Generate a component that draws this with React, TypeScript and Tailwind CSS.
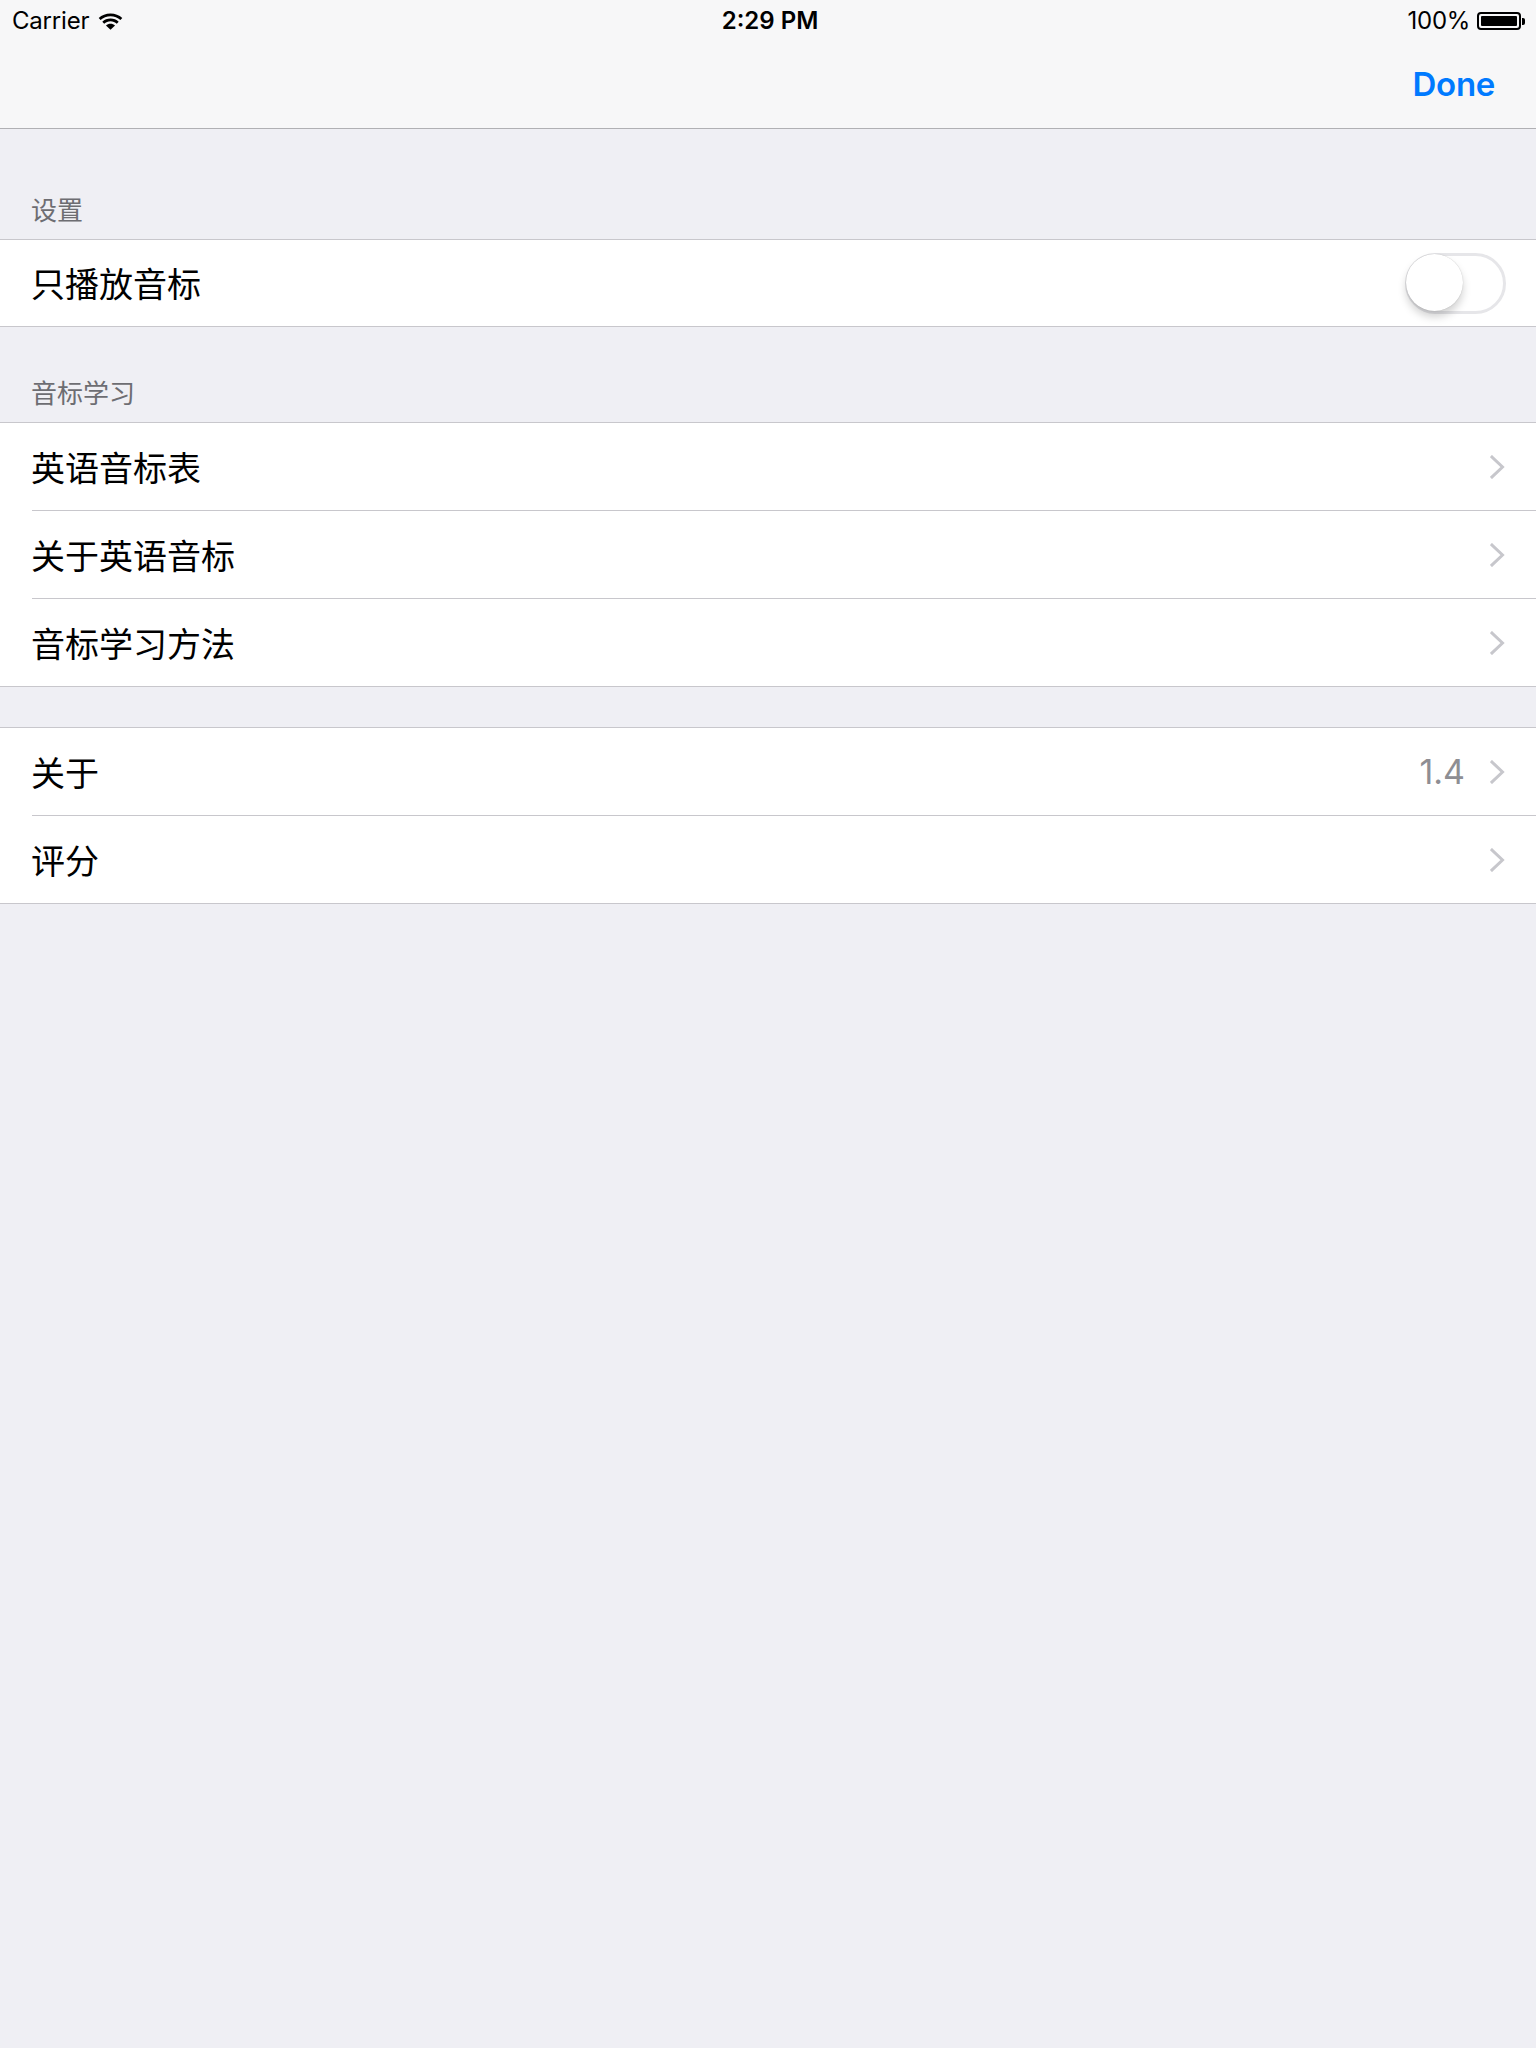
import { useState } from "react";

const cjk = { fontFamily: '"Noto Sans CJK SC", "Noto Sans", sans-serif' };
const latin = { fontFamily: 'Inter, "Liberation Sans", sans-serif' };

function Wifi() {
  return (
    <svg width="25" height="17" viewBox="0 0 25 17" fill="#000">
      <path d="M12.5 0.5C7.9 0.5 3.8 2.2 0.7 5L2.6 7C5.2 4.7 8.7 3.2 12.5 3.2S19.8 4.7 22.4 7L24.3 5C21.2 2.2 17.1 0.5 12.5 0.5Z" />
      <path d="M12.5 5.6C9.3 5.6 6.5 6.8 4.3 8.7L6.2 10.7C7.9 9.2 10.1 8.3 12.5 8.3S17.1 9.2 18.8 10.7L20.7 8.7C18.5 6.8 15.7 5.6 12.5 5.6Z" />
      <path d="M12.5 10.7C10.8 10.7 9.2 11.4 8 12.4L12.5 16.8L17 12.4C15.8 11.4 14.2 10.7 12.5 10.7Z" />
    </svg>
  );
}

function Battery() {
  return (
    <div className="flex items-center">
      <div className="w-[44px] h-[18px] rounded-[4px] border-2 border-black p-[2px]">
        <div className="w-full h-full rounded-[1px] bg-black" />
      </div>
      <div className="w-[3px] h-[7px] rounded-r-[2px] bg-black ml-[1px]" />
    </div>
  );
}

function Chevron() {
  return (
    <svg width="15" height="24" viewBox="0 0 15 24" fill="none">
      <polyline
        points="2,2 12.5,12 2,22"
        stroke="#c7c7cc"
        strokeWidth="3"
        strokeLinecap="square"
      />
    </svg>
  );
}

function Toggle() {
  const [on, setOn] = useState(false);
  return (
    <button
      onClick={() => setOn(!on)}
      className={`relative w-[101px] h-[61px] rounded-full border-[3px] ${
        on ? "bg-[#4cd964] border-[#4cd964]" : "bg-white border-[#e6e6e9]"
      }`}
    >
      <span
        className={`absolute top-[-2px] ${
          on ? "left-[40px]" : "left-[-2px]"
        } w-[57px] h-[57px] rounded-full bg-white shadow-[0_6px_8px_rgba(0,0,0,0.18),0_0_1px_rgba(0,0,0,0.25)]`}
      />
    </button>
  );
}

function SectionHeader({ title, height }: { title: string; height: string }) {
  return (
    <div className={`${height} flex items-end pl-[31px] pb-[14px]`}>
      <span className="text-[26px] leading-[32px] text-[#6d6d72]" style={cjk}>
        {title}
      </span>
    </div>
  );
}

function Row({
  label,
  detail,
  last,
}: {
  label: string;
  detail?: string;
  last?: boolean;
}) {
  return (
    <div className="pl-[32px] bg-white">
      <div
        className={`flex items-center pr-[31px] ${
          last ? "h-[87px]" : "h-[88px] border-b border-[#c8c7cc]"
        }`}
      >
        <span className="flex-1 -ml-[1px] text-[34px] leading-[40px] text-black" style={cjk}>
          {label}
        </span>
        {detail && (
          <span className="text-[34px] text-[#8e8e93] mr-[25px]" style={latin}>
            {detail}
          </span>
        )}
        <Chevron />
      </div>
    </div>
  );
}

export default function App() {
  return (
    <div className="min-h-screen bg-[#efeff4]">
      <div className="bg-[#f7f7f8] border-b border-[#b0b0b4]">
        <div
          className="h-[40px] pt-[2px] relative flex items-center justify-between pl-[12px] pr-[11px] text-[24px] text-black"
          style={latin}
        >
          <div className="flex items-center gap-[9px]">
            <span className="tracking-[-0.2px]">Carrier</span>
            <Wifi />
          </div>
          <span className="absolute left-1/2 -translate-x-1/2 ml-[2px] font-semibold">2:29 PM</span>
          <div className="flex items-center gap-[7px]">
            <span className="tracking-[-0.3px]">100%</span>
            <Battery />
          </div>
        </div>
        <div className="h-[88px] pt-[2px] flex items-center justify-end pr-[41px]">
          <button className="text-[33px] font-semibold text-[#007aff] tracking-[-0.3px]" style={latin}>
            Done
          </button>
        </div>
      </div>

      <SectionHeader title="设置" height="h-[110px]" />
      <div className="border-y border-[#c8c7cc]">
        <div className="pl-[32px] bg-white">
          <div className="h-[86px] flex items-center pr-[30px]">
            <span className="flex-1 -ml-[1px] text-[34px] leading-[40px] text-black" style={cjk}>
              只播放音标
            </span>
            <Toggle />
          </div>
        </div>
      </div>

      <SectionHeader title="音标学习" height="h-[95px]" />
      <div className="border-y border-[#c8c7cc]">
        <Row label="英语音标表" />
        <Row label="关于英语音标" />
        <Row label="音标学习方法" last />
      </div>

      <div className="h-[40px]" />
      <div className="border-y border-[#c8c7cc]">
        <Row label="关于" detail="1.4" />
        <Row label="评分" last />
      </div>
    </div>
  );
}
